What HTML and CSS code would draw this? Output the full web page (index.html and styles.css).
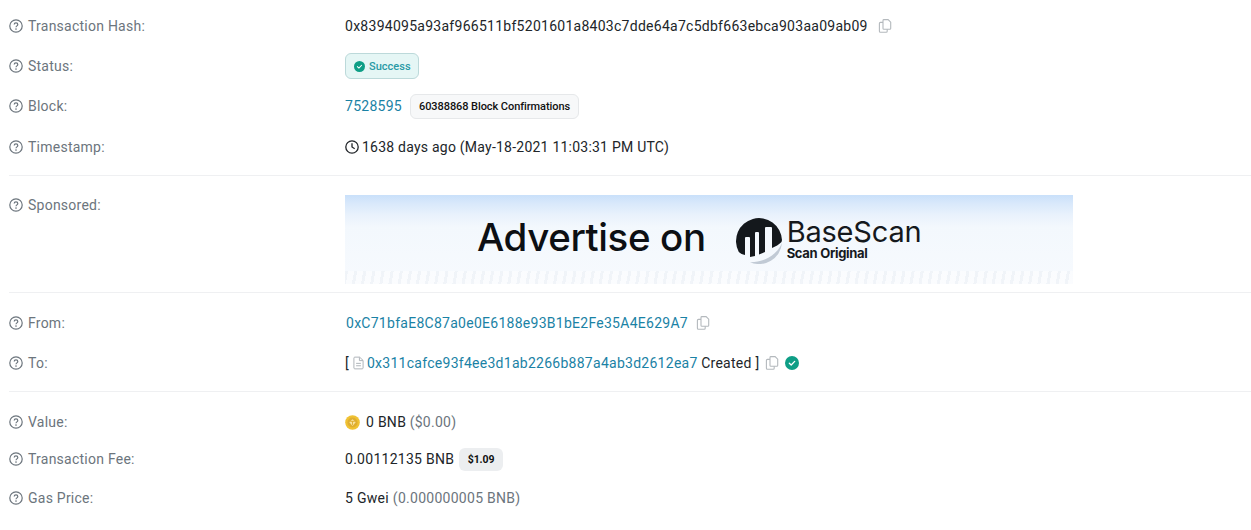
FILE: index.html
```html
<!DOCTYPE html>
<html lang="en">
<head>
<meta charset="utf-8">
<title>Transaction Details</title>
<link rel="stylesheet" href="styles.css">
</head>
<body>
<svg class="defs" width="0" height="0" aria-hidden="true">
  <symbol id="q" viewBox="0 0 14 14">
    <circle cx="7" cy="7" r="6.2" fill="none" stroke="currentColor" stroke-width="1.2"/>
    <path d="M5.2 5.6C5.2 4.5 6 3.9 7 3.9s1.8.6 1.8 1.6c0 1.3-1.8 1.4-1.8 2.7" fill="none" stroke="currentColor" stroke-width="1.2"/>
    <circle cx="7" cy="10.1" r=".8" fill="currentColor"/>
  </symbol>
  <symbol id="copy" viewBox="0 0 14 14">
    <path d="M5 1.5C5 1 5.4.6 5.9.6h4.2l2.6 2.6v6.2c0 .5-.4.9-.9.9H5.9c-.5 0-.9-.4-.9-.9z" fill="#fff" stroke="currentColor" stroke-width="1.1"/>
    <path d="M5 3.4H2.4c-.6 0-1 .4-1 1v7.9c0 .6.4 1 1 1h5.8c.6 0 1-.4 1-1v-2" fill="none" stroke="currentColor" stroke-width="1.1"/>
  </symbol>
  <symbol id="check" viewBox="0 0 14 14">
    <circle cx="7" cy="7" r="7" fill="#0e9e86"/>
    <path d="M4.3 7.2l1.9 1.8 3.5-3.6" fill="none" stroke="#fff" stroke-width="1.3" stroke-linecap="round" stroke-linejoin="round"/>
  </symbol>
</svg>
<main class="page">
  <section class="group group-first">
    <div class="row">
      <div class="label"><svg class="qicon"><use href="#q"/></svg>Transaction Hash:</div>
      <div class="value"><span>0x8394095a93af966511bf5201601a8403c7dde64a7c5dbf663ebca903aa09ab09</span><svg class="copy copy-hash"><use href="#copy"/></svg></div>
    </div>
    <div class="row">
      <div class="label"><svg class="qicon"><use href="#q"/></svg>Status:</div>
      <div class="value"><span class="status"><svg class="status-check"><use href="#check"/></svg>Success</span></div>
    </div>
    <div class="row">
      <div class="label"><svg class="qicon"><use href="#q"/></svg>Block:</div>
      <div class="value"><a class="link" href="#">7528595</a><span class="chip chip-block">60388868 Block Confirmations</span></div>
    </div>
    <div class="row row-time">
      <div class="label"><svg class="qicon"><use href="#q"/></svg>Timestamp:</div>
      <div class="value">
        <svg class="clock" viewBox="0 0 14 14"><circle cx="7" cy="7" r="6.2" fill="none" stroke="currentColor" stroke-width="1.3"/><path d="M7 3.2V7l2.7 1.7" fill="none" stroke="currentColor" stroke-width="1.3"/></svg>
        <span class="time-text">1638 days ago (May-18-2021 11:03:31 PM UTC)</span>
      </div>
    </div>
  </section>

  <section class="group group-sponsored">
    <div class="row-top">
      <div class="label label-sponsored"><svg class="qicon"><use href="#q"/></svg>Sponsored:</div>
      <div class="banner">
        <span class="ad-title">Advertise on</span>
        <svg class="ad-logo" viewBox="0 0 46 46">
          <path d="M2.8 34A23 23 0 1 1 46 22L45.500 24C43 26.500 39.500 28.500 36 30V10Q36 9 35 9H30Q29 9 29 10V34L23 36.500V15Q23 14 22 14H20Q19 14 19 15V38L14 39V20Q14 19 13 19H10Q9 19 9 20V37C6.500 36.500 4.500 35.500 2.800 34Z" fill="#14181c"/>
          <path d="M46 25A23 23 0 0 1 14 44.200C28 44.500 41 37 46 25Z" fill="#c1cad5"/>
        </svg>
        <div class="ad-brand">
          <span class="ad-name">BaseScan</span>
          <span class="ad-tag">Scan Original</span>
        </div>
      </div>
    </div>
  </section>

  <section class="group group-addr">
    <div class="row">
      <div class="label"><svg class="qicon"><use href="#q"/></svg>From:</div>
      <div class="value"><a class="link link-from" href="#">0xC71bfaE8C87a0e0E6188e93B1bE2Fe35A4E629A7</a><svg class="copy copy-from"><use href="#copy"/></svg></div>
    </div>
    <div class="row">
      <div class="label"><svg class="qicon"><use href="#q"/></svg>To:</div>
      <div class="value">
        <span>[</span>
        <svg class="doc" viewBox="0 0 12 14"><path d="M1 1.6C1 1 1.4.6 2 .6h5.2L11 4.2v8.2c0 .6-.4 1-1 1H2c-.6 0-1-.4-1-1zM3.400 7.400h5.200M3.400 10h5.200M7 .8v3.600h3.800" fill="none" stroke="currentColor" stroke-width="1"/></svg>
        <a class="link" href="#">0x311cafce93f4ee3d1ab2266b887a4ab3d2612ea7</a>
        <span class="created">Created ]</span>
        <svg class="copy copy-to"><use href="#copy"/></svg>
        <svg class="to-check"><use href="#check"/></svg>
      </div>
    </div>
  </section>

  <section class="group group-last">
    <div class="row row-value">
      <div class="label"><svg class="qicon"><use href="#q"/></svg>Value:</div>
      <div class="value">
        <svg class="coin" viewBox="0 0 16 16"><circle cx="8" cy="8" r="7.800" fill="#f0c233"/><circle cx="8" cy="8" r="5.400" fill="#dfae30"/><path d="M8 4.400L11.400 7.600 8 11.600 4.600 7.600Z" fill="#f8e3a0"/><path d="M5.600 6.800h4.800M8 6.800v4" stroke="#dca92a" stroke-width=".9" fill="none"/></svg>
        <span>0 BNB</span><span class="muted muted-usd">($0.00)</span>
      </div>
    </div>
    <div class="row row-fee">
      <div class="label"><svg class="qicon"><use href="#q"/></svg>Transaction Fee:</div>
      <div class="value"><span>0.00112135 BNB</span><span class="chip chip-fee">$1.09</span></div>
    </div>
    <div class="row row-gas">
      <div class="label"><svg class="qicon"><use href="#q"/></svg>Gas Price:</div>
      <div class="value"><span>5 Gwei</span><span class="muted muted-gas">(0.000000005 BNB)</span></div>
    </div>
  </section>
</main>
</body>
</html>
```
FILE: styles.css
```css
* { box-sizing: border-box; }
html, body { margin: 0; padding: 0; background: #fff; }
body {
  font-family: Roboto, "Liberation Sans", sans-serif;
  font-size: 14px;
  color: #212529;
  height: 530px;
  overflow: hidden;
}
.defs { position: absolute; }
.page { padding: 0 0 0 9px; }
.group { border-bottom: 1px solid #eff0f2; }
.group-first { padding: 6px 0 8px; }
.group-sponsored { padding: 19px 0 8px; }
.group-addr { padding: 10px 0 8px; }
.group-last { padding: 11px 0 0; border-bottom: 0; }
.row { display: flex; align-items: center; height: 40px; }
.row-top { display: flex; align-items: flex-start; }
.row-time { margin-top: 1px; }
.row-value { height: 38px; }
.row-fee { height: 36px; }
.row-gas { height: 42px; }
.label {
  flex: 0 0 336px;
  display: flex;
  align-items: center;
  color: #6c757d;
  letter-spacing: .24px;
}
.label-sponsored { height: 20px; }
.qicon { width: 14px; height: 14px; margin-right: 5px; color: #6c757d; }
.value { display: flex; align-items: center; white-space: pre; letter-spacing: .27px; }
.time-text { letter-spacing: .23px; }
.link { color: #1a82a5; text-decoration: none; }
.link-from { margin-left: 1px; }
.muted { color: #6c757d; }
.muted-usd { margin-left: 3.5px; }
.muted-gas { margin-left: 4px; }
.copy { width: 14px; height: 14px; color: #b4b9bd; }
.copy-hash { margin-left: 10px; }
.copy-from { margin-left: 8px; }
.copy-to { margin-left: 5.500px; }
.to-check { width: 14px; height: 14px; margin-left: 6px; }
.status {
  display: flex;
  align-items: center;
  height: 26px;
  width: 74px;
  padding-left: 8px;
  font-size: 11px;
  font-weight: 500;
  letter-spacing: .02px;
  color: #2a9aa6;
  background: #e5f6f5;
  border: 1px solid #bcd9da;
  border-radius: 6px;
}
.status-check { width: 11px; height: 11px; margin-right: 4px; }
.chip {
  display: inline-flex;
  align-items: center;
  font-size: 11px;
  font-weight: 500;
  letter-spacing: -.07px;
  color: #111;
}
.chip-block {
  height: 25px;
  margin-left: 8px;
  padding: 0 8px;
  background: #f7f8f9;
  border: 1px solid #e6e8ea;
  border-radius: 6px;
}
.chip-fee {
  height: 23px;
  margin-left: 5px;
  padding: 0 8.500px;
  background: #eceef0;
  border-radius: 6px;
  font-weight: 700;
  font-size: 10.5px;
}
.clock { width: 14px; height: 14px; margin-right: 3px; color: #212529; }
.doc { width: 11px; height: 14px; margin: 0 3px 0 4px; color: #a9aeb3; }
.created { margin-left: 3.500px; }
.coin { width: 15px; height: 15px; margin-right: 6px; }
.banner {
  width: 728px;
  height: 89px;
  display: flex;
  align-items: flex-start;
  padding: 23px 0 0 132px;
  background:
    repeating-linear-gradient(100deg, rgba(205, 210, 216, .14) 0 3px, rgba(255, 255, 255, .45) 3px 9px) bottom / 100% 13px no-repeat,
    linear-gradient(180deg, #c9e0fa 0, #d8e8fb 8px, #e9f2fc 20px, #f3f8fd 32px, #f7fafe 89px);
  font-family: Inter, "Liberation Sans", sans-serif;
  color: #0c0f13;
}
.ad-title { font-size: 38.5px; font-weight: 500; letter-spacing: -.4px; line-height: 1; }
.ad-logo { width: 46px; height: 46px; margin-left: 30px; flex: none; }
.ad-brand { display: flex; flex-direction: column; margin-left: 5px; }
.ad-name { height: 27px; font-size: 29px; font-weight: 400; line-height: 27px; letter-spacing: -.2px; color: #15191d; }
.ad-tag { font-size: 13px; font-weight: 700; line-height: 16px; letter-spacing: -.3px; color: #15191d; }
```
